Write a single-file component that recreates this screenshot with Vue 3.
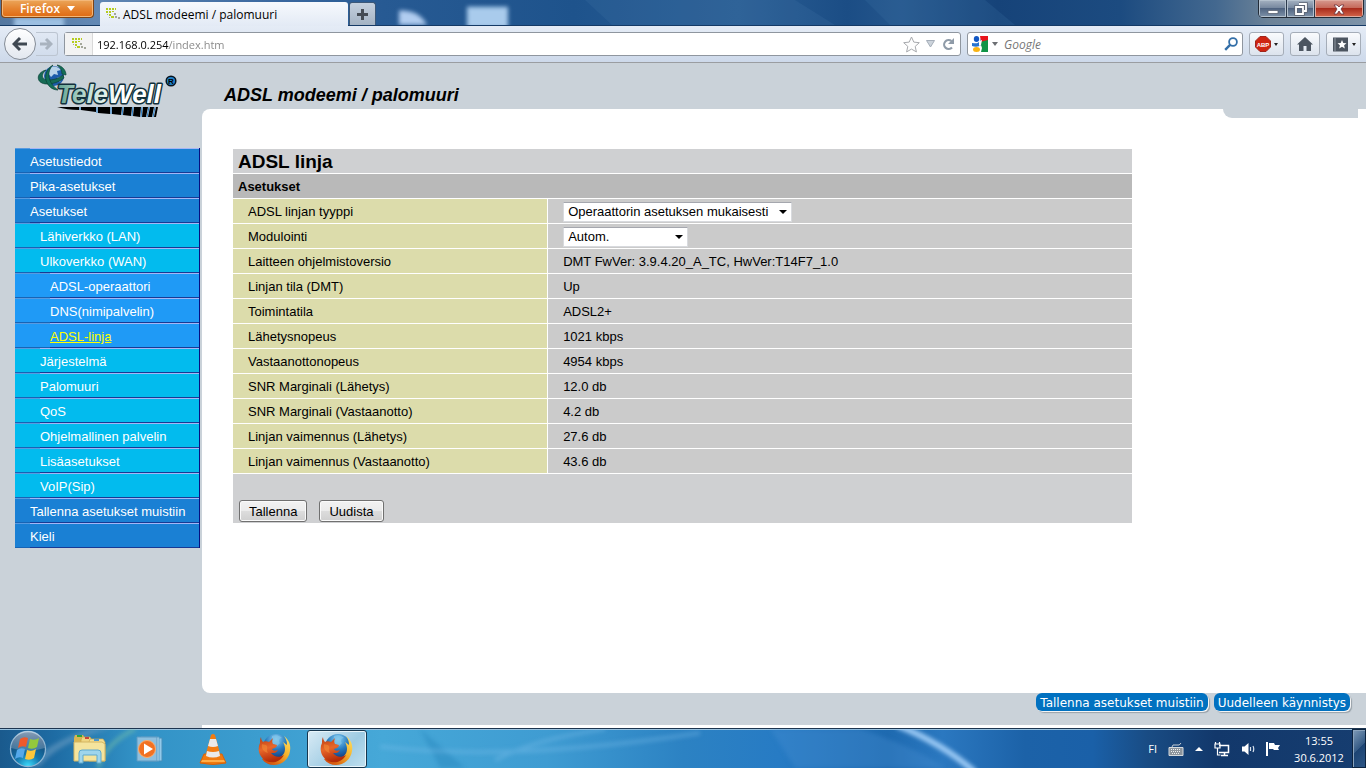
<script setup>
import { ref } from 'vue';

const address = ref('192.168.0.254/index.htm');
const search = ref('');
const lineType = ref('Operaattorin asetuksen mukaisesti');
const modulation = ref('Autom.');

const menu = [
  { label: 'Asetustiedot', level: 1 },
  { label: 'Pika-asetukset', level: 1 },
  { label: 'Asetukset', level: 1 },
  { label: 'Lähiverkko (LAN)', level: 2 },
  { label: 'Ulkoverkko (WAN)', level: 2 },
  { label: 'ADSL-operaattori', level: 3 },
  { label: 'DNS(nimipalvelin)', level: 3 },
  { label: 'ADSL-linja', level: 3, active: true },
  { label: 'Järjestelmä', level: 2 },
  { label: 'Palomuuri', level: 2 },
  { label: 'QoS', level: 2 },
  { label: 'Ohjelmallinen palvelin', level: 2 },
  { label: 'Lisäasetukset', level: 2 },
  { label: 'VoIP(Sip)', level: 2 },
  { label: 'Tallenna asetukset muistiin', level: 1 },
  { label: 'Kieli', level: 1 }
];

const status = [
  ['Laitteen ohjelmistoversio', 'DMT FwVer: 3.9.4.20_A_TC, HwVer:T14F7_1.0'],
  ['Linjan tila (DMT)', 'Up'],
  ['Toimintatila', 'ADSL2+'],
  ['Lähetysnopeus', '1021 kbps'],
  ['Vastaanottonopeus', '4954 kbps'],
  ['SNR Marginali (Lähetys)', '12.0 db'],
  ['SNR Marginali (Vastaanotto)', '4.2 db'],
  ['Linjan vaimennus (Lähetys)', '27.6 db'],
  ['Linjan vaimennus (Vastaanotto)', '43.6 db']
];

// Two Firefox entries: the pinned one and the open window
const foxes = [false, true];
</script>

<template>
  <div class="desktop">
    <svg width="0" height="0" class="defs" aria-hidden="true">
      <defs>
        <symbol id="favicon" viewBox="0 0 14 13">
          <path d="M0 0h2v2H0zM3 0h2v2H3zM6 0h2v2H6zM9 0h1v2H9zM0 3h2v2H0zM3 3h2v2H3zM6 3h2v1H6zM3 6h2v2H3zM5 8h3v2H5z" fill="#b5cc1f" />
          <path d="M1 6h1v1H1zM8 5h2v2H8zM9 8h2v2H9zM12 9h2v2h-2zM3 9h1v1H3z" fill="#a4a79a" />
        </symbol>
        <symbol id="firefox" viewBox="0 0 34 34">
          <circle cx="18" cy="15" r="13" fill="url(#foxGlobe)" />
          <path d="M14 4c5-2 8 0 10 2-3 0-4 3-2 5l-3 3-3-2-3 1 1-4z" fill="#83c6ea" opacity=".7" />
          <path d="M26 4c5 4 7 9 6 15-1 8-8 14-16 14-5 0-9-2-12-6l7-2c7 4 16 0 16-8 0-3-1-5-2-7l4 3c0-4-1-6-3-9z" fill="url(#foxTail)" />
          <path d="M3 5c0 2 1 4 2 5 1-1 4-1 6 0l4-4c-1 3-1 4 0 6l4 1c0 2-2 3-5 4 1 2 3 2 6 1-2 4-5 3-7 3 3 4 8 5 13 2-4 7-11 9-18 6C1 25-1 17 2 11 2 9 2 7 3 5z" fill="url(#foxBody)" />
          <path d="M4 12c1 1 4 0 5 2 1 1-1 4 1 7-4-1-7-4-6-9z" fill="#f18a35" opacity=".6" />
        </symbol>
        <radialGradient id="foxGlobe" cx=".5" cy=".2" r=".8">
          <stop offset="0" stop-color="#8bd2f4" />
          <stop offset=".5" stop-color="#267abf" />
          <stop offset="1" stop-color="#12306f" />
        </radialGradient>
        <linearGradient id="foxTail" x1="1" y1="0" x2=".2" y2="1">
          <stop offset="0" stop-color="#ffe56c" />
          <stop offset=".45" stop-color="#f6b42c" />
          <stop offset="1" stop-color="#d04a0c" />
        </linearGradient>
        <linearGradient id="foxBody" x1="0" y1="0" x2=".3" y2="1">
          <stop offset="0" stop-color="#b93c12" />
          <stop offset=".5" stop-color="#e8672a" />
          <stop offset="1" stop-color="#b42c08" />
        </linearGradient>
      </defs>
    </svg>

    <header class="titlebar">
      <svg class="glass" viewBox="0 0 1366 26" preserveAspectRatio="none" aria-hidden="true">
        <path d="M585 0h210l40 26H612z" fill="#447aa9" opacity=".2" />
        <path d="M865 0h120l30 26H890z" fill="#4277aa" opacity=".2" />
        <g class="blur">
          <path d="M399 11q20-1 28 15h-28z" fill="#b1cdf0" />
          <path d="M467 7h41v22h-41z" fill="#a9cbec" />
          <path d="M14 18h50v12H14z" fill="#9dc0e2" />
        </g>
      </svg>
      <button class="firefox-menu" type="button">
        Firefox
        <svg width="8" height="5" viewBox="0 0 8 5" aria-hidden="true"><path d="M0 0h8L4 5z" fill="#fff" /></svg>
      </button>
      <div class="tab">
        <svg width="14" height="13" aria-hidden="true"><use href="#favicon" /></svg>
        <span>ADSL modeemi / palomuuri</span>
      </div>
      <button class="new-tab" type="button" aria-label="Uusi välilehti">
        <svg width="11" height="11" viewBox="0 0 11 11"><path d="M4 0h3v4h4v3H7v4H4V7H0V4h4z" fill="#454c55" /></svg>
      </button>
      <div class="window-buttons">
        <button type="button" aria-label="Pienennä">
          <svg width="14" height="14" viewBox="0 0 14 14"><path d="M2 8.500h10v3H2z" fill="#fff" stroke="#5c6372" stroke-width=".8" /></svg>
        </button>
        <button type="button" aria-label="Palauta">
          <svg width="14" height="14" viewBox="0 0 14 14">
            <path d="M5 2h7v7h-2M2 5h7v7H2z" fill="none" stroke="#5c6372" stroke-width="3.500" />
            <path d="M5 2h7v7h-2M2 5h7v7H2z" fill="none" stroke="#fff" stroke-width="1.800" />
          </svg>
        </button>
        <button type="button" class="close" aria-label="Sulje">
          <svg width="14" height="14" viewBox="0 0 14 14"><path d="M2 3h3l2 2 2-2h3L9 7l3 5H9L7 9l-2 3H2l3-5z" fill="#fff" stroke="#6b3038" stroke-width=".8" /></svg>
        </button>
      </div>
    </header>

    <nav class="toolbar">
      <div class="history">
        <button class="back" type="button" aria-label="Takaisin">
          <svg width="16" height="16" viewBox="0 0 16 16"><path d="M8 2L2 8l6 6M2 8h13" fill="none" stroke="#3f4852" stroke-width="3" /></svg>
        </button>
        <button class="forward" type="button" aria-label="Eteenpäin">
          <svg width="13" height="14" viewBox="0 0 13 14"><path d="M6 2l5 5-5 5M11 7H0" fill="none" stroke="#a9b3bf" stroke-width="3" /></svg>
        </button>
      </div>
      <div class="field address">
        <span class="identity"><svg width="14" height="13" aria-hidden="true"><use href="#favicon" /></svg></span>
        <input v-model="address" type="text" aria-label="Osoite" />
        <svg class="star" width="17" height="17" viewBox="0 0 17 17" aria-hidden="true"><path d="M8.500 1l2.300 5.100 5.500.6-4.100 3.700 1.200 5.500-4.900-2.800-4.900 2.800 1.200-5.500L.7 6.700l5.500-.6z" fill="#fdfdfd" stroke="#a7a9ad" /></svg>
        <svg class="drop" width="9" height="8" viewBox="0 0 9 8" aria-hidden="true"><path d="M.5.500h8l-4 6.500z" fill="#ccd3db" stroke="#a4adb8" /></svg>
        <svg class="reload" width="13" height="13" viewBox="0 0 13 13" aria-hidden="true">
          <path d="M10 9.500A4.500 4.500 0 1 1 9.500 3" fill="none" stroke="#8f9ba8" stroke-width="2.200" />
          <path d="M12 0v6H6z" fill="#8f9ba8" />
        </svg>
      </div>
      <div class="field search">
        <svg width="16" height="16" viewBox="0 0 16 16" aria-hidden="true">
          <path d="M8 0h8v6H9z" fill="#e8141c" />
          <path d="M8 6l8-2v12H9l1-4z" fill="#109447" />
          <ellipse cx="4.500" cy="3" rx="2.700" ry="3" fill="#1157c4" />
          <path d="M0 7c3 0 5 1 7-1l2-3v6c-2 2-6 2-9 1z" fill="#2673cf" />
          <path d="M7 5l3-1-1 5-2 1z" fill="#fff" />
          <ellipse cx="4.500" cy="13.500" rx="3.500" ry="2.500" fill="#f8b313" />
        </svg>
        <svg width="6" height="4" viewBox="0 0 6 4" aria-hidden="true"><path d="M0 0h6L3 4z" fill="#6c6f73" /></svg>
        <input v-model="search" type="text" placeholder="Google" aria-label="Haku" />
        <svg width="14" height="14" viewBox="0 0 14 14" aria-hidden="true">
          <circle cx="9" cy="5" r="3.900" fill="none" stroke="#336fa8" stroke-width="1.800" />
          <path d="M6.300 7.700L1.200 12.800" stroke="#336fa8" stroke-width="2.400" />
        </svg>
      </div>
      <button class="tool wide" type="button" aria-label="Adblock Plus">
        <svg width="16" height="16" viewBox="0 0 16 16">
          <path d="M5 .500h6L15.500 5v6L11 15.500H5L.5 11V5z" fill="#cf2411" stroke="#a0261b" />
          <text x="8" y="11" class="abp">ABP</text>
        </svg>
        <svg width="4" height="3" viewBox="0 0 4 3"><path d="M0 0h4L2 3z" fill="#222" /></svg>
      </button>
      <button class="tool" type="button" aria-label="Koti">
        <svg width="16" height="14" viewBox="0 0 16 14"><path d="M8 0l8 7.500h-2V14H9.500V9h-3v5H2V7.500H0z" fill="#4c5560" /></svg>
      </button>
      <button class="tool wide" type="button" aria-label="Kirjanmerkit">
        <svg width="17" height="15" viewBox="0 0 17 15">
          <path d="M1 .500h15v14H1z" fill="#4c5560" />
          <path d="M3 1v13" stroke="#8d969f" />
          <path d="M10 3l1.300 2.900 3.200.3-2.400 2.100.7 3.200-2.800-1.700-2.800 1.700.7-3.200-2.400-2.100 3.200-.3z" fill="#fff" />
        </svg>
        <svg width="4" height="3" viewBox="0 0 4 3"><path d="M0 0h4L2 3z" fill="#222" /></svg>
      </button>
    </nav>

    <main class="page">
      <aside class="sidebar">
        <svg class="logo" width="144" height="56" viewBox="0 0 144 56" role="img" aria-label="TeleWell">
          <defs>
            <linearGradient id="letters" x1="0" x2="1">
              <stop offset="0" stop-color="#5fa08f" />
              <stop offset=".3" stop-color="#c3e0d8" />
              <stop offset=".6" stop-color="#fff" />
            </linearGradient>
          </defs>
          <circle cx="17" cy="13" r="10" fill="#1c5cab" />
          <path d="M13 5c4-3 8-1 11 2l-4 1 1 4-4-1-3 3-3-4zM20 15l5-2-2 6z" fill="#b8d3ea" />
          <path d="M9 7C-2 10-1 21 10 21c6 0 12-2 17-6l-1-3c-5 4-10 5-15 5-6 0-8-5-2-10z" fill="#176b55" stroke="#0c4238" stroke-width=".7" />
          <path d="M16 2c-7 7-5 18 5 25-12 0-18-17-5-25zM20 2c6 1 9 6 9 10l-4-1c0-4-2-7-5-9z" fill="#137058" stroke="#0d4035" stroke-width=".7" />
          <text x="20" y="40" class="wordmark">TeleWell</text>
          <circle cx="134" cy="18" r="4.800" fill="#2080c8" stroke="#08121c" stroke-width="1.500" />
          <text x="134" y="21" class="mark">R</text>
          <path d="M20 44h22v3q-12 0-22-3z" fill="#000" />
          <path d="M44 44h15v5l-15-2zM61 44h12v7l-12-1zM75 44h10l-1 8-9-1zM87 44h8l-1 9-8-1zM97 44h7l-1 10-7-1zM106 44h5l-2 10h-4zM113 44h4l-2 10h-4zM119 44h2l-2 10h-2z" fill="#000" />
          <path d="M43 44v3M60 44v6M74 44v7M86 44l-1 8M96 44l-1 9M105 44l-1 10M112 44l-2 10M118 44l-2 10" stroke="#277fca" />
        </svg>
        <ul class="menu">
          <li v-for="item in menu" :key="item.label" :class="'level-' + item.level">
            <a href="#" :class="{ active: item.active }" @click.prevent>{{ item.label }}</a>
          </li>
        </ul>
      </aside>

      <div class="main">
        <h1 class="page-title">ADSL modeemi / palomuuri</h1>
        <section class="panel">
          <form @submit.prevent>
            <table>
              <colgroup>
                <col class="col-label" />
                <col />
              </colgroup>
              <thead>
                <tr class="heading"><th colspan="2">ADSL linja</th></tr>
                <tr class="subheading"><th colspan="2">Asetukset</th></tr>
              </thead>
              <tbody>
                <tr>
                  <th scope="row"><label for="line-type">ADSL linjan tyyppi</label></th>
                  <td>
                    <span class="select">
                      <select id="line-type" v-model="lineType" class="select-wide">
                        <option>Operaattorin asetuksen mukaisesti</option>
                      </select>
                    </span>
                  </td>
                </tr>
                <tr>
                  <th scope="row"><label for="modulation">Modulointi</label></th>
                  <td>
                    <span class="select">
                      <select id="modulation" v-model="modulation" class="select-narrow">
                        <option>Autom.</option>
                      </select>
                    </span>
                  </td>
                </tr>
                <tr v-for="row in status" :key="row[0]">
                  <th scope="row">{{ row[0] }}</th>
                  <td>{{ row[1] }}</td>
                </tr>
              </tbody>
            </table>
            <div class="actions">
              <button type="submit">Tallenna</button>
              <button type="button">Uudista</button>
            </div>
          </form>
        </section>
        <div class="page-footer">
          <button type="button">Tallenna asetukset muistiin</button>
          <button type="button">Uudelleen käynnistys</button>
        </div>
      </div>
    </main>

    <footer class="taskbar">
      <svg class="glass" viewBox="0 0 1366 40" preserveAspectRatio="none" aria-hidden="true">
        <g class="blur">
          <path d="M40 38Q60 12 110 0h-20Q45 15 25 40z" fill="#7aa5c8" opacity=".5" />
          <path d="M98 40Q105 15 135 0" fill="none" stroke="#83cba5" stroke-width="4" opacity=".5" />
          <path d="M420 0l45 40h-25z" fill="#2383b8" opacity=".4" />
          <path d="M380 18q130 16 320-14M495 32q40-22 110-32" fill="none" stroke="#84c2ef" stroke-width="4" opacity=".35" />
          <path d="M770 0h90q60 20 85 40H795z" fill="#4b91d4" opacity=".3" />
          <path d="M897-4q44 18 78 48" fill="none" stroke="#9ccaf5" stroke-width="6" />
        </g>
      </svg>
      <button class="start" type="button" aria-label="Käynnistä">
        <svg width="38" height="38" viewBox="0 0 38 38">
          <defs>
            <radialGradient id="orb" cx=".5" cy="1" r=".9">
              <stop offset="0" stop-color="#3de0ff" />
              <stop offset=".4" stop-color="#1477ad" />
              <stop offset="1" stop-color="#153f6c" />
            </radialGradient>
            <linearGradient id="shine" x1="0" x2="0" y1="0" y2="1">
              <stop offset="0" stop-color="#dbe5ee" stop-opacity=".6" />
              <stop offset="1" stop-color="#8ea9c1" stop-opacity=".35" />
            </linearGradient>
          </defs>
          <circle cx="19" cy="19" r="17.500" fill="url(#orb)" stroke="#8db5d2" stroke-width="1.300" />
          <path d="M2 18a17 17 0 0 1 34 0q-17 5-34 0z" fill="url(#shine)" />
          <path d="M11 9q4-3 8-1l-2 9q-4-2-8 1z" fill="#ee5a2c" />
          <path d="M21 9q5 2 9-1l-2 9q-4 3-9 1z" fill="#93c83d" />
          <path d="M8 20q4-3 8-1l-2 9q-4-2-8 1z" fill="#55a9ea" />
          <path d="M18 20q5 2 9-1l-2 9q-4 3-9 1z" fill="#fdc73b" />
        </svg>
      </button>
      <button class="task" type="button" aria-label="Resurssienhallinta">
        <svg width="34" height="32" viewBox="0 0 34 32">
          <path d="M2 5l1-3h8l2 3v23H2z" fill="#d9b653" />
          <path d="M5 2h5v2H5z" fill="#2da33b" />
          <path d="M9 7l1-3h8l2 3v20H9z" fill="#efd681" stroke="#caa448" stroke-width=".7" />
          <path d="M13 4h4v2h-4z" fill="#c84537" />
          <path d="M17 9l1-3h13l2 3v19H17z" fill="#f4df93" stroke="#cdaa50" stroke-width=".7" />
          <path d="M22 6h5v2h-5z" fill="#4b97cf" />
          <path d="M2 9h28l3 2v17H2z" fill="#f5e49d" stroke="#d4b562" />
          <path d="M7 30V20q0-3 3-3h16q3 0 3 3v10h-4v-8H11v8z" fill="#9fd5ec" stroke="#5ea9ce" />
        </svg>
      </button>
      <button class="task" type="button" aria-label="Media Player">
        <svg width="30" height="28" viewBox="0 0 30 28">
          <path d="M9 3h17v23H9z" fill="#94c9e9" stroke="#468eb9" />
          <path d="M5 2h18v24H5z" fill="#c0e1f4" stroke="#5a9fc8" />
          <path d="M1 2h20v24H1z" fill="#8ebfde" stroke="#5a9ac2" />
          <circle cx="11" cy="14" r="8.500" fill="#f27122" stroke="#f9ad6e" />
          <path d="M8 8.500l9 5.500-9 5.500z" fill="#fff" />
        </svg>
      </button>
      <button class="task" type="button" aria-label="VLC">
        <svg width="28" height="32" viewBox="0 0 28 32">
          <path d="M5 21h18l4 9q-13 3-26 0z" fill="#ef7a10" stroke="#d5620a" />
          <path d="M3 27h22l1 2H2z" fill="#ffae49" />
          <path d="M12 2q2-2 4 0l6 22q-8 4-16 0z" fill="#f27c12" />
          <path d="M11 6h6l2 7q-5 2-10 0zM8 18q6 2 12 0l1 5q-7 3-14 0z" fill="#eaeaea" />
        </svg>
      </button>
      <button v-for="open in foxes" :key="open" class="task" :class="{ open }" type="button" aria-label="Firefox">
        <svg width="34" height="34"><use href="#firefox" /></svg>
      </button>

      <div class="tray">
        <span>FI</span>
        <svg width="16" height="14" viewBox="0 0 16 14" aria-hidden="true">
          <path d="M4 5q0-3 4-2t5-2" fill="none" stroke="#c7cfd7" />
          <path d="M1 5.500h14v8H1z" fill="#8c949c" stroke="#d5dade" />
          <path d="M3 7.500h10M3 9.500h10M4 11.500h8" stroke="#edf0f2" stroke-dasharray="1 1" />
        </svg>
        <svg width="8" height="4" viewBox="0 0 8 4" aria-hidden="true"><path d="M4 0l4 4H0z" fill="#fff" /></svg>
        <svg width="16" height="16" viewBox="0 0 16 16" aria-hidden="true">
          <path d="M5 4.500h9.500v7H5M7 14.500h7M10.500 12v2" fill="none" stroke="#fff" stroke-width="1.500" />
          <path d="M1 3h5v4H1zM1.500 1v2M5.500 1v2M3.500 7v7h3" fill="none" stroke="#fff" stroke-width="1.200" />
        </svg>
        <svg width="14" height="14" viewBox="0 0 14 14" aria-hidden="true">
          <path d="M1 4.500h2.500L7.500 1v12L3.500 9.500H1z" fill="#fff" />
          <path d="M9.500 5v4M12 4q1.500 3 0 6" fill="none" stroke="#d8e2ee" stroke-width="1.200" />
        </svg>
        <svg width="14" height="14" viewBox="0 0 14 14" aria-hidden="true">
          <path d="M1 0v14" stroke="#fff" stroke-width="2" />
          <path d="M3 1h5l1 2h5l-2 3 1 2H8L7 7H3z" fill="#fff" />
        </svg>
        <div class="clock">
          <span>13:55</span>
          <span>30.6.2012</span>
        </div>
        <button class="show-desktop" type="button" aria-label="Näytä työpöytä"></button>
      </div>
    </footer>
  </div>
</template>

<style>
body {
  background: #cad2d9;
}
</style>

<style scoped>
.desktop {
  display: flex;
  flex-direction: column;
  min-height: 100vh;
  overflow: hidden;
  font-family: "Liberation Sans", Arial, sans-serif;
  font-size: 13px;
  color: #000;
}

.desktop *,
.desktop *::before,
.desktop *::after {
  box-sizing: border-box;
}

.defs {
  position: absolute;
}

button {
  display: flex;
  align-items: center;
  justify-content: center;
  margin: 0;
  padding: 0;
  border: 0;
  background: none;
  font: inherit;
  color: inherit;
}

svg {
  flex: none;
}

.glass {
  position: absolute;
  inset: 0;
  width: 100%;
  height: 100%;
}

.blur {
  filter: blur(2px);
}

/* Window frame */
.titlebar {
  position: relative;
  display: flex;
  align-items: flex-end;
  height: 26px;
  border-bottom: 1px solid #153a66;
  background: linear-gradient(90deg, #54779f 0, #6288b4 7%, #3a689f 20%, #275a93 28%, #1e538c 42%, #2a5e94 54%, #1b4d85 62%, #25568c 66%, #164379 73%, #1c4b80 82%, #43688f 89%, #6d8398 93%, #7d93a9 100%);
  font-family: "Open Sans", sans-serif;
  font-size: 12px;
}

.titlebar > :not(.glass) {
  position: relative;
}

.firefox-menu {
  align-self: flex-start;
  gap: 7px;
  width: 93px;
  height: 18px;
  margin: 0 6px 0 1px;
  border: 1px solid #7b4419;
  border-top: 0;
  border-radius: 0 0 4px 4px;
  background: linear-gradient(#eba65a, #e58430 50%, #df6a13);
  box-shadow: inset 0 0 0 1px #f3b778;
  font-weight: 600;
  color: #fff;
}

.tab {
  display: flex;
  align-items: center;
  gap: 3px;
  width: 248px;
  height: 24px;
  margin-bottom: -1px;
  padding: 0 6px;
  border-radius: 3px 3px 0 0;
  background: linear-gradient(#f6f9fd, #e3eaf5);
  white-space: nowrap;
}

.new-tab {
  width: 27px;
  height: 23px;
  margin-left: 1px;
  border: 1px solid #3c5878;
  border-bottom: 0;
  border-radius: 3px 3px 0 0;
  background: linear-gradient(#c4d0de, #a4b3c4);
}

.window-buttons {
  display: flex;
  align-self: flex-start;
  height: 18px;
  margin-left: auto;
  margin-right: 2px;
  border: 1px solid #232c38;
  border-top: 0;
  border-radius: 0 0 5px 5px;
  overflow: hidden;
}

.window-buttons button {
  width: 28px;
  background: linear-gradient(#a5b2c1, #7889a0 45%, #4f6380 50%, #7f93aa);
  border-right: 1px solid #2c3a4c;
  box-shadow: inset 0 0 0 1px #b4c1ce;
}

.window-buttons .close {
  width: 48px;
  border: 0;
  background: linear-gradient(#d69a8f, #c66a5b 45%, #a92c1c 50%, #d4664b);
  box-shadow: inset 0 0 0 1px #e0aca0;
}

/* Navigation bar */
.toolbar {
  display: flex;
  align-items: center;
  gap: 6px;
  height: 37px;
  padding: 0 5px 0 4px;
  border-bottom: 1px solid #9a9da1;
  background: linear-gradient(#e5ecf6, #cdd9ea);
  font-family: "Open Sans", sans-serif;
  font-size: 11px;
}

.history {
  display: flex;
  align-items: center;
}

.back {
  width: 32px;
  height: 32px;
  border: 1px solid #858c96;
  border-radius: 50%;
  background: linear-gradient(#fff, #e2e7ef);
}

.forward {
  width: 22px;
  height: 24px;
  border: 1px solid #bcc5d1;
  border-left: 0;
  border-radius: 0 3px 3px 0;
}

.field {
  display: flex;
  align-items: center;
  height: 24px;
  border: 1px solid #8f969f;
  border-radius: 3px;
  background: #fff;
}

.field input {
  flex: 1;
  min-width: 0;
  height: 22px;
  padding: 0;
  border: 0;
  outline: 0;
  background: none;
  font: inherit;
  color: #000;
}

.address {
  flex: 1;
}

/* Host in black, path in grey */
.address input {
  background: linear-gradient(90deg, #000 72px, #858585 72px);
  background-clip: text;
  -webkit-text-fill-color: transparent;
}

.identity {
  display: flex;
  align-items: center;
  justify-content: center;
  width: 28px;
  height: 22px;
  margin-right: 4px;
  border-right: 1px solid #d9d9d9;
  background: #f3f3f3;
}

.star {
  margin-right: 6px;
}

.drop {
  margin-right: 7px;
}

.reload {
  margin-right: 5px;
}

.search {
  gap: 4px;
  width: 276px;
  padding: 0 4px;
}

.search input {
  margin-left: 2px;
  font-size: 12px;
}

.search input::placeholder {
  font-style: italic;
  color: #777;
  opacity: 1;
}

.tool {
  gap: 3px;
  width: 30px;
  height: 24px;
  border: 1px solid #a5adb8;
  border-radius: 3px;
  background: linear-gradient(#f9fbfd, #dce3ed);
}

.wide {
  width: 35px;
}

.abp {
  font: bold 6px "Liberation Sans", sans-serif;
  fill: #fff;
  text-anchor: middle;
}

/* Router page */
.page {
  display: flex;
  flex: 1;
  background: #cad2d9;
}

.sidebar {
  width: 202px;
}

.logo {
  display: block;
  margin: 0 0 0 37px;
}

.wordmark {
  font: italic bold 26px "Liberation Sans", sans-serif;
  fill: url(#letters);
  stroke: #12303c;
  stroke-width: 3px;
  stroke-linejoin: round;
  paint-order: stroke;
}

.mark {
  font: bold 8px "Liberation Sans", sans-serif;
  text-anchor: middle;
}

.menu {
  width: 185px;
  margin: 29px 0 0 15px;
  padding: 0;
  list-style: none;
}

.menu li {
  --indent: 15px;
  --fill: #1a80d4;
  height: 25px;
  padding-left: var(--indent);
  border-right: 1px solid #061080;
  background:
    linear-gradient(90deg, #589ae0 var(--indent), #a4b6f6 var(--indent)) top / 100% 1px no-repeat,
    linear-gradient(90deg, #1864b4 var(--indent), #183a94 var(--indent)) bottom / 100% 1px no-repeat,
    var(--fill);
  line-height: 28px;
  white-space: nowrap;
}

.menu .level-2 {
  --indent: 25px;
  --fill: #02bbee;
}

.menu .level-3 {
  --indent: 35px;
  --fill: #1f9af6;
}

.menu a {
  color: #fff;
  text-decoration: none;
}

.menu .active {
  color: #ff0;
  text-decoration: underline;
}

.main {
  display: flex;
  flex: 1;
  flex-direction: column;
  border-bottom: 3px solid #fff;
}

.page-title {
  height: 46px;
  margin: 0;
  padding: 0 22px;
  font-size: 18px;
  font-style: italic;
  line-height: 64px;
}

.panel {
  position: relative;
  flex: 1;
  padding: 40px 234px 40px 31px;
  border-radius: 8px 0 0 8px;
  background: #fff;
}

/* Tab shape hanging from the header */
.panel::before {
  content: "";
  position: absolute;
  top: 0;
  right: 8px;
  width: 135px;
  height: 9px;
  border-radius: 0 0 0 9px;
  background: #cad2d9;
}

table {
  width: 100%;
  table-layout: fixed;
  border-collapse: collapse;
}

.col-label {
  width: 35%;
}

th,
td {
  height: 25px;
  padding: 2px 15px 0;
  border-bottom: 1px solid #fff;
  font-weight: normal;
  line-height: 22px;
  text-align: left;
}

tbody th {
  border-right: 1px solid #fff;
  background: #dcdcab;
}

td {
  background: #cbcbcb;
}

.heading th,
.subheading th {
  padding: 2px 5px 0;
  font-weight: bold;
}

.heading th {
  height: 24px;
  background: #cfd0d2;
  font-size: 19px;
  line-height: 21px;
}

.subheading th {
  background: #b9b9b9;
}

.select {
  position: relative;
  display: inline-block;
  height: 20px;
  vertical-align: middle;
}

.select::after {
  content: "";
  position: absolute;
  top: 8px;
  right: 5px;
  border: 4px solid transparent;
  border-top-color: #000;
  border-bottom: 0;
  pointer-events: none;
}

select {
  display: block;
  height: 20px;
  padding: 0 16px 0 4px;
  border: 1px solid #d8dade;
  border-top-color: #a5a7ae;
  border-radius: 1px;
  background: #fff;
  font: inherit;
  line-height: 18px;
  color: #000;
  appearance: none;
}

.select-wide {
  width: 229px;
}

.select-narrow {
  width: 125px;
}

.actions {
  display: flex;
  gap: 12px;
  padding: 26px 6px 1px;
  background: #cfd0d2;
}

.actions button {
  height: 22px;
  padding: 1px 9px 0;
  border: 1px solid #707070;
  border-radius: 3px;
  background: linear-gradient(#f2f2f2, #ebebeb 50%, #dddddd 50%, #cfcfcf);
  box-shadow: inset 0 0 0 1px #fafafa;
}

.page-footer {
  display: flex;
  align-items: flex-start;
  justify-content: flex-end;
  gap: 6px;
  height: 32px;
  padding-right: 16px;
}

.page-footer button {
  height: 18px;
  padding: 1px 4px 0;
  border-radius: 6px;
  background: #0171c0;
  box-shadow: 1px 1px 1px #fff, 2px 2px 1px #8e98a0;
  font-family: "DejaVu Sans", Verdana, sans-serif;
  font-size: 12px;
  color: #fff;
}

/* Taskbar */
.taskbar {
  position: relative;
  display: flex;
  align-items: center;
  height: 40px;
  border-top: 1px solid #1d3550;
  background: linear-gradient(90deg, #1a5a8d 0, #1e6ca4 4%, #3292c6 10%, #46a8d8 28%, #3f9cd2 40%, #2c82c3 50%, #277bc4 57%, #1e6ab0 65%, #2b78c0 69%, #1c62a8 75%, #1a60a8 80%, #194c84 84%, #12386b 89%, #163d70 100%);
  box-shadow: inset 0 1px 0 #9ac3e0;
  overflow: hidden;
}

.taskbar > :not(.glass) {
  position: relative;
}

.start {
  width: 55px;
  height: 38px;
  margin-right: 4px;
}

.task {
  width: 60px;
  height: 38px;
  margin-right: 2px;
}

.task.open {
  border: 1px solid #17374f;
  border-radius: 3px;
  background: linear-gradient(135deg, #d9ebf5, #9ecbe3 60%, #c0e0ef);
  box-shadow: inset 0 0 0 1px #e8f5fb;
}

.tray {
  display: flex;
  align-items: center;
  align-self: stretch;
  gap: 11px;
  margin-left: auto;
  font-family: "Open Sans", sans-serif;
  font-size: 11px;
  color: #fff;
}

.clock {
  display: flex;
  flex-direction: column;
  align-items: center;
  width: 56px;
  line-height: 17px;
}

.show-desktop {
  align-self: stretch;
  width: 14px;
  margin-left: -6px;
  border: 1px solid #0c2440;
  background: linear-gradient(135deg, #7f9bb8, #345a85 50%, #1d4473 50%, #2c5585);
  box-shadow: inset 1px 1px 0 #8aa3bd;
}
</style>
